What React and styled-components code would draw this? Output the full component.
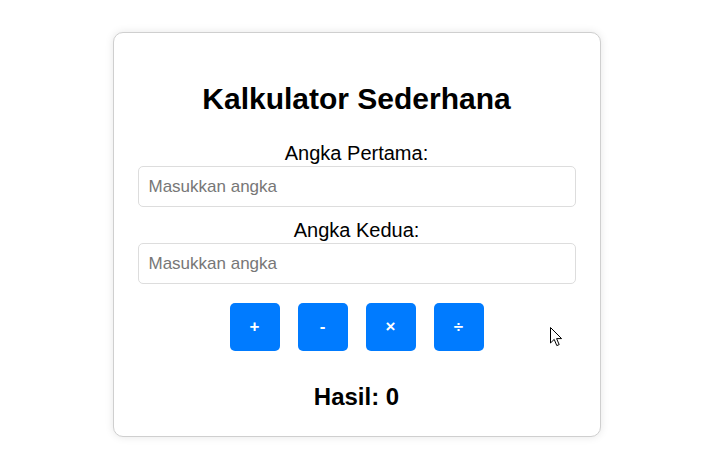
import React, { useState } from "react";
import styled, { createGlobalStyle } from "styled-components";

const GlobalStyle = createGlobalStyle`
  html, body {
    margin: 0;
    padding: 0;
    background: #fff;
    font-family: "Liberation Sans", Arial, sans-serif;
  }
`;

const App = () => {
  const [a, setA] = useState("");
  const [b, setB] = useState("");
  const [result, setResult] = useState(0);

  const calc = (op) => {
    const x = parseFloat(a) || 0;
    const y = parseFloat(b) || 0;
    if (op === "+") setResult(x + y);
    if (op === "-") setResult(x - y);
    if (op === "×") setResult(x * y);
    if (op === "÷") setResult(y === 0 ? 0 : x / y);
  };

  return (
    <Page>
      <GlobalStyle />
      <Card>
        <Title>Kalkulator Sederhana</Title>
        <Field>
          <Label>Angka Pertama:</Label>
          <Input
            type="number"
            placeholder="Masukkan angka"
            value={a}
            onChange={(e) => setA(e.target.value)}
          />
        </Field>
        <Field $gap={11}>
          <Label>Angka Kedua:</Label>
          <Input
            type="number"
            placeholder="Masukkan angka"
            value={b}
            onChange={(e) => setB(e.target.value)}
          />
        </Field>
        <ButtonRow>
          {["+", "-", "×", "÷"].map((op) => (
            <OpButton key={op} onClick={() => calc(op)}>
              {op}
            </OpButton>
          ))}
        </ButtonRow>
        <Result>Hasil: {result}</Result>
      </Card>

      {/* mouse pointer from the screenshot */}
      <Cursor width="13" height="20" viewBox="0 0 13 20">
        <path
          d="M0.5 0.5 L0.5 16 L4.2 12.4 L6.8 18.6 L9.2 17.6 L6.6 11.6 L11.6 11.6 Z"
          fill="#fff"
          stroke="#000"
          strokeWidth="1"
          strokeLinejoin="round"
        />
      </Cursor>
    </Page>
  );
};

export default App;

const Page = styled.div`
  position: relative;
  display: flex;
  justify-content: center;
  padding: 32px 0 0 1px;
  min-height: 472px;
  box-sizing: border-box;
`;

const Card = styled.div`
  width: 488px;
  height: 405px;
  box-sizing: border-box;
  padding: 24px;
  border: 1px solid #cfcfcf;
  border-radius: 10px;
  background: #fff;
  box-shadow: 0 0 8px rgba(0, 0, 0, 0.1);
  text-align: center;
`;

const Title = styled.h2`
  margin: 24px 0 24px;
  font-size: 30px;
  line-height: 36px;
  font-weight: bold;
  color: #000;
`;

const Field = styled.div`
  display: flex;
  flex-direction: column;
  margin-top: ${(p) => p.$gap || 0}px;
`;

const Label = styled.label`
  font-size: 20px;
  line-height: 24px;
  color: #000;
`;

const Input = styled.input`
  margin-top: 1px;
  height: 41px;
  box-sizing: border-box;
  padding: 0 10px;
  border: 1px solid #ddd;
  border-radius: 5px;
  font-family: "Liberation Sans", Arial, sans-serif;
  font-size: 17px;
  color: #000;
  outline: none;

  &::placeholder {
    color: #777;
  }

  &::-webkit-outer-spin-button,
  &::-webkit-inner-spin-button {
    -webkit-appearance: none;
    margin: 0;
  }
`;

const ButtonRow = styled.div`
  display: flex;
  justify-content: center;
  gap: 18px;
  margin-top: 19px;
`;

const OpButton = styled.button`
  width: 50px;
  height: 48px;
  border: none;
  border-radius: 5px;
  background: #007bff;
  color: #fff;
  font-family: "Liberation Sans", Arial, sans-serif;
  font-size: 17px;
  font-weight: bold;
  cursor: pointer;
`;

const Result = styled.h3`
  margin: 32px 0 0;
  font-size: 24px;
  line-height: 28px;
  font-weight: bold;
  color: #000;
`;

const Cursor = styled.svg`
  position: absolute;
  left: 550px;
  top: 327px;
  pointer-events: none;
`;
